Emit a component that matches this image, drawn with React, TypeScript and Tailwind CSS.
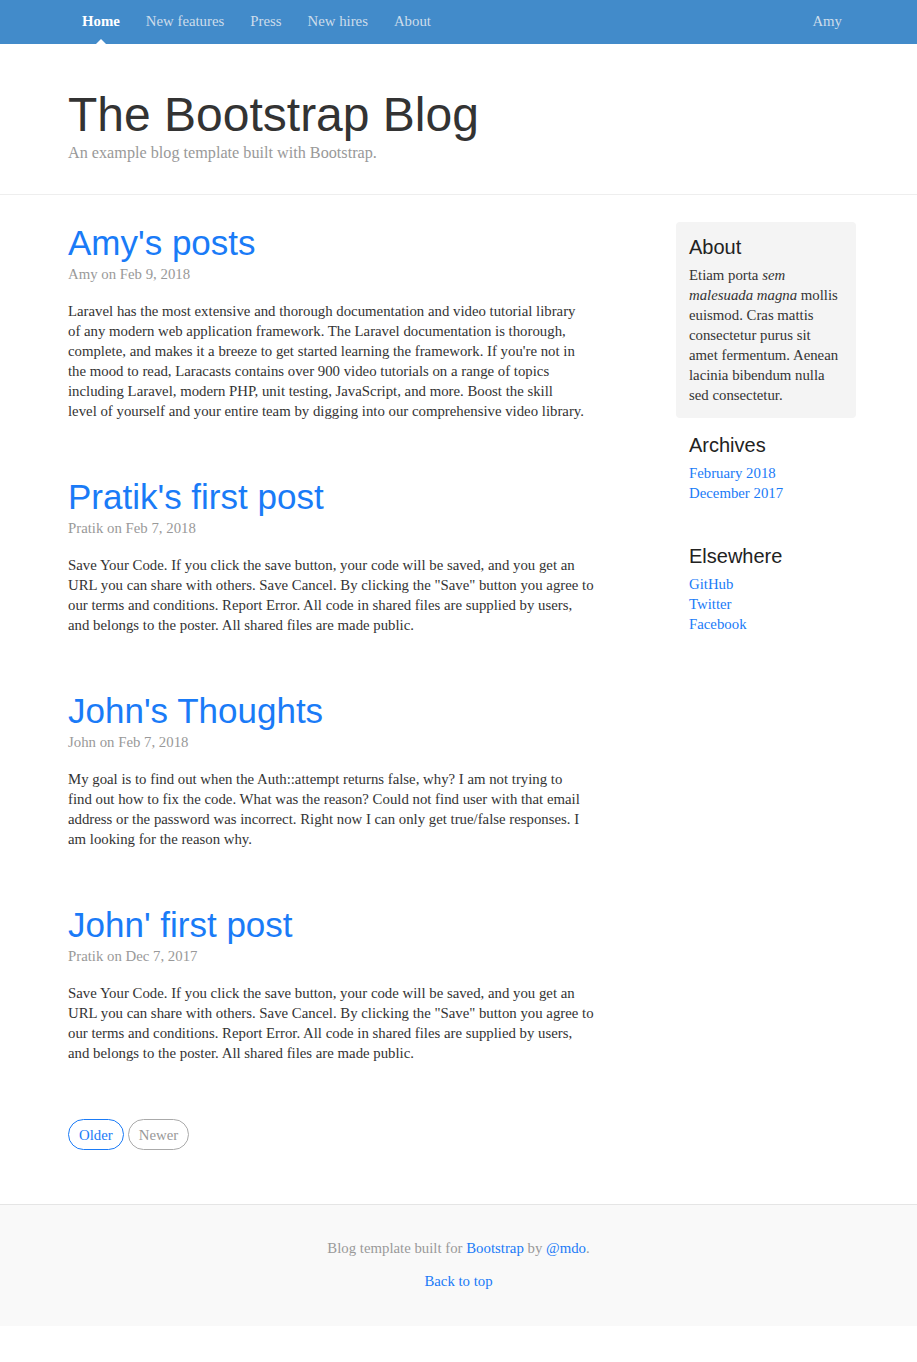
const serif = "font-['Liberation_Serif',Georgia,serif]"
const sans = "font-['Liberation_Sans','Helvetica_Neue',Arial,sans-serif]"
const blue = "text-[#1a7bf7]"

const navItems = ["Home", "New features", "Press", "New hires", "About"]

const savePost = [
  "Save Your Code. If you click the save button, your code will be saved, and you get an",
  'URL you can share with others. Save Cancel. By clicking the "Save" button you agree to',
  "our terms and conditions. Report Error. All code in shared files are supplied by users,",
  "and belongs to the poster. All shared files are made public.",
]

// lines kept as in the original layout so wrapping matches
const posts = [
  {
    title: "Amy's posts",
    meta: "Amy on Feb 9, 2018",
    lines: [
      "Laravel has the most extensive and thorough documentation and video tutorial library",
      "of any modern web application framework. The Laravel documentation is thorough,",
      "complete, and makes it a breeze to get started learning the framework. If you're not in",
      "the mood to read, Laracasts contains over 900 video tutorials on a range of topics",
      "including Laravel, modern PHP, unit testing, JavaScript, and more. Boost the skill",
      "level of yourself and your entire team by digging into our comprehensive video library.",
    ],
  },
  { title: "Pratik's first post", meta: "Pratik on Feb 7, 2018", lines: savePost },
  {
    title: "John's Thoughts",
    meta: "John on Feb 7, 2018",
    lines: [
      "My goal is to find out when the Auth::attempt returns false, why? I am not trying to",
      "find out how to fix the code. What was the reason? Could not find user with that email",
      "address or the password was incorrect. Right now I can only get true/false responses. I",
      "am looking for the reason why.",
    ],
  },
  { title: "John' first post", meta: "Pratik on Dec 7, 2017", lines: savePost },
]

const Navbar = () => (
  <nav className={`${serif} bg-[#428bca] h-[44px] flex items-center pl-[69px] pr-[62px] pb-[2px] text-[14.8px]`}>
    <div className="flex flex-1 items-center h-full">
      {navItems.map((item, i) => (
        <a
          key={item}
          href="#"
          className={`relative h-full flex items-center px-[13px] ${
            i === 0 ? "text-white font-bold" : "text-[#cdddeb]"
          }`}
        >
          {item}
          {i === 0 && (
            <span className="absolute bottom-[-2px] left-1/2 -translate-x-1/2 w-0 h-0 border-x-[5px] border-b-[5px] border-x-transparent border-b-white" />
          )}
        </a>
      ))}
    </div>
    <a href="#" className="px-[13px] text-[#cdddeb]">
      Amy
    </a>
  </nav>
)

const Post = ({ title, meta, lines }: { title: string; meta: string; lines: string[] }) => (
  <div className="mb-[56px]">
    <h2 className={`${sans} text-[35px] leading-[40px] ${blue}`}>
      <a href="#">{title}</a>
    </h2>
    <p className="text-[#999] mt-[1px] mb-[17px]">{meta}</p>
    <p className="text-[#333]">
      {lines.map((l) => (
        <span key={l} className="block whitespace-nowrap">
          {l}
        </span>
      ))}
    </p>
  </div>
)

const SidebarList = ({ title, links }: { title: string; links: string[] }) => (
  <div className="px-[13px] mb-[40px]">
    <h4 className={`${sans} text-[20px] leading-[26px] text-[#222] mb-[5px]`}>{title}</h4>
    <ol>
      {links.map((l) => (
        <li key={l}>
          <a href="#" className={blue}>
            {l}
          </a>
        </li>
      ))}
    </ol>
  </div>
)

export default function App() {
  return (
    <div className={`${serif} text-[14.8px] leading-[20px] text-[#333] bg-white min-h-[1362px]`}>
      <Navbar />

      <header className="border-b border-[#eee] pl-[68px] pt-[43px] h-[151px]">
        <h1 className={`${sans} text-[48px] leading-[56px] text-[#333]`}>The Bootstrap Blog</h1>
        <p className="text-[#999] text-[16.2px]">An example blog template built with Bootstrap.</p>
      </header>

      <div className="flex pl-[68px] pr-[61px]">
        <main className="w-[518px] pt-[28px]">
          {posts.map((p) => (
            <Post key={p.title + p.meta} {...p} />
          ))}

          <nav className="flex gap-[4px] mb-[54px]">
            <a
              href="#"
              className={`h-[31px] px-[10px] flex items-center rounded-full border border-[#1a7bf7] ${blue}`}
            >
              Older
            </a>
            <span className="h-[31px] px-[10px] flex items-center rounded-full border border-[#aaa] text-[#999]">
              Newer
            </span>
          </nav>
        </main>

        <aside className="ml-auto w-[180px] pt-[27px]">
          <div className="bg-[#f4f4f4] rounded-[4px] px-[13px] pt-[12px] pb-[13px] mb-[14px]">
            <h4 className={`${sans} text-[20px] leading-[26px] text-[#222] mb-[5px]`}>About</h4>
            <p className="whitespace-nowrap">
              Etiam porta <em>sem</em>
              <br />
              <em>malesuada magna</em> mollis
              <br />
              euismod. Cras mattis
              <br />
              consectetur purus sit
              <br />
              amet fermentum. Aenean
              <br />
              lacinia bibendum nulla
              <br />
              sed consectetur.
            </p>
          </div>
          <SidebarList title="Archives" links={["February 2018", "December 2017"]} />
          <SidebarList title="Elsewhere" links={["GitHub", "Twitter", "Facebook"]} />
        </aside>
      </div>

      <footer className="bg-[#f9f9f9] border-t border-[#e5e5e5] h-[122px] flex flex-col items-center pt-[33px] text-[#999]">
        <p>
          Blog template built for{" "}
          <a href="#" className={blue}>
            Bootstrap
          </a>{" "}
          by{" "}
          <a href="#" className={blue}>
            @mdo
          </a>
          .
        </p>
        <p className="mt-[13px]">
          <a href="#" className={blue}>
            Back to top
          </a>
        </p>
      </footer>
    </div>
  )
}
